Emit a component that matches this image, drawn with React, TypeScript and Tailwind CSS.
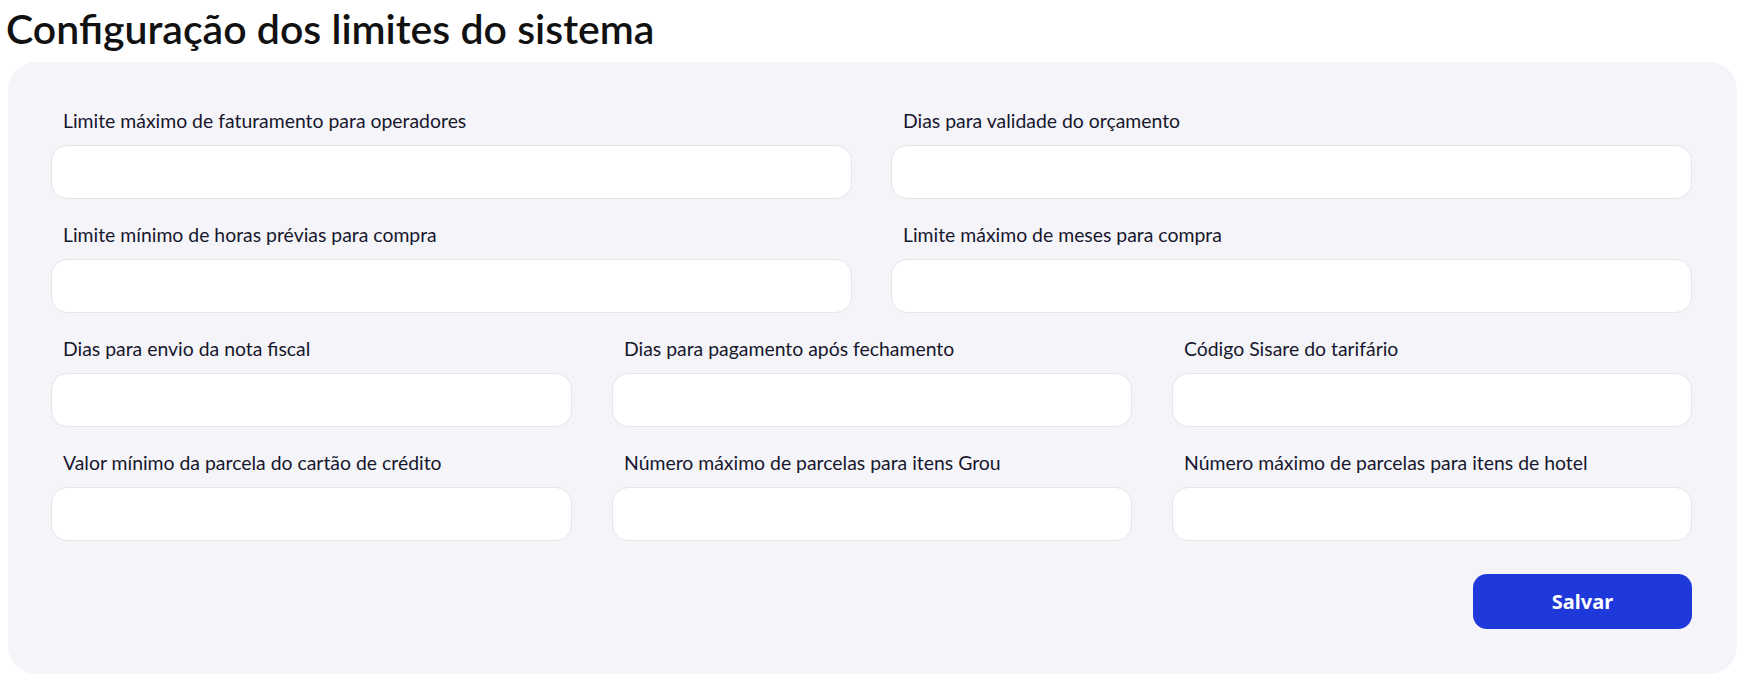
import React from "react";

const Field = ({ label }: { label: string }) => (
  <div className="flex flex-col">
    <label className="pl-3 pb-[12px] text-[19.4px] leading-[25px] text-[#17172e]">
      {label}
    </label>
    <input
      type="text"
      className="h-[54px] w-full rounded-[16px] border border-[#e4e4e9] bg-white px-4 outline-none"
    />
  </div>
);

export default function App() {
  return (
    <div className="min-h-screen bg-white font-['Lato',sans-serif]">
      <h1 className="pl-[6px] pt-[4px] text-[41px] font-semibold leading-[50px] text-[#111111] font-['Lato',sans-serif]">
        Configuração dos limites do sistema
      </h1>
      <div className="mx-2 mt-[8px] rounded-[28px] bg-[#f5f5f9] pl-[43px] pr-[45px] pt-[46px] pb-[45px]">
        <div className="flex flex-col gap-[23px]">
          <div className="grid grid-cols-2 gap-x-[39px]">
            <Field label="Limite máximo de faturamento para operadores" />
            <Field label="Dias para validade do orçamento" />
          </div>
          <div className="grid grid-cols-2 gap-x-[39px]">
            <Field label="Limite mínimo de horas prévias para compra" />
            <Field label="Limite máximo de meses para compra" />
          </div>
          <div className="grid grid-cols-[521px_1fr_1fr] gap-x-10">
            <Field label="Dias para envio da nota fiscal" />
            <Field label="Dias para pagamento após fechamento" />
            <Field label="Código Sisare do tarifário" />
          </div>
          <div className="grid grid-cols-[521px_1fr_1fr] gap-x-10">
            <Field label="Valor mínimo da parcela do cartão de crédito" />
            <Field label="Número máximo de parcelas para itens Grou" />
            <Field label="Número máximo de parcelas para itens de hotel" />
          </div>
        </div>
        <div className="mt-8 flex justify-end">
          <button className="mt-px h-[55px] w-[219px] rounded-[14px] bg-[#1e38d9] text-[20px] font-bold text-white font-['Noto_Sans',sans-serif]">
            Salvar
          </button>
        </div>
      </div>
    </div>
  );
}
